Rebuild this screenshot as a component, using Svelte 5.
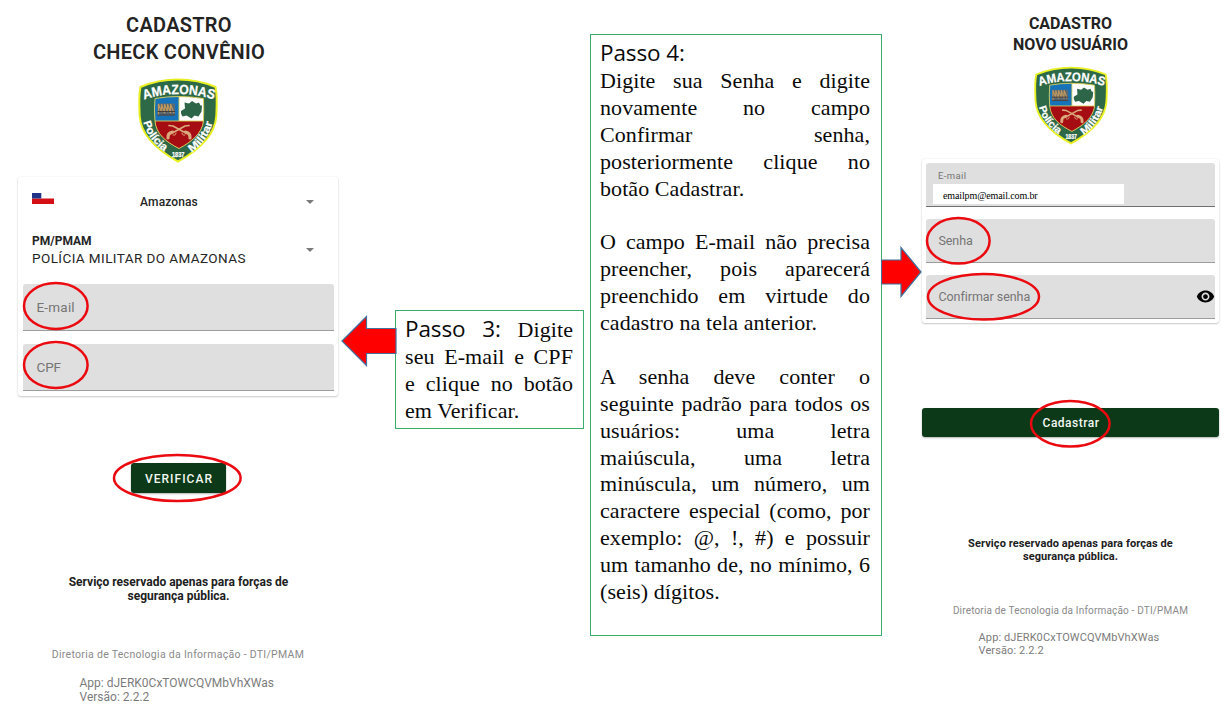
<script>
  const step3 = ['seu E-mail e CPF', 'e clique no botão'];
  const step4 = [
    ['Digite sua Senha e digite', 'novamente no campo', 'Confirmar senha,', 'posteriormente clique no', 'botão Cadastrar.'],
    ['O campo E-mail não precisa', 'preencher, pois aparecerá', 'preenchido em virtude do', 'cadastro na tela anterior.'],
    ['A senha deve conter o', 'seguinte padrão para todos os', 'usuários: uma letra', 'maiúscula, uma letra', 'minúscula, um número, um', 'caractere especial (como, por', 'exemplo: @, !, #) e possuir', 'um tamanho de, no mínimo, 6', '(seis) dígitos.']
  ];
</script>

{#snippet badge(id)}
  <svg class="badge" viewBox="0 0 80 85" aria-hidden="true">
    <path d="M40 1.500C54 1.500 67 4.500 77.500 9C79.500 18 78.800 28 78.300 38C77 59 59 73 40 83.500C21 73 3 59 1.700 38C1.200 28 .5 18 2.500 9C13 4.500 26 1.500 40 1.500Z" fill="#2d6847" stroke="#e9f022" stroke-width="2"/>
    <path d="M17 20.500Q40 16.500 65.500 20.500Q66 32 65.500 43C64 56 53 64 41 70.500C28 64 18 56 17 43Q16 32 17 20.500Z" fill="#fff"/>
    <path d="M17 20.500Q29 18.300 41 18.200V43H17Q16 32 17 20.500Z" fill="#1673b9"/>
    <path d="M17 43H65.500C64 56 53 64 41 70.500C28 64 18 56 17 43Z" fill="#a60d12"/>
    <path d="M17 43H65.500M41 18V43M17 20.500Q40 16.500 65.500 20.500Q66 32 65.500 43C64 56 53 64 41 70.500C28 64 18 56 17 43Q16 32 17 20.500Z" fill="none" stroke="#d8cf55" stroke-width=".9"/>
    <path d="M19.500 25.500h17.500v12h-17.500z" fill="#596873"/>
    <path d="M20.500 37v-11l3 8v-8l3 9v-9l3 8v-8l3 9v-9l3.500 9" fill="none" stroke="#bd965b" stroke-width="1.200"/>
    <path d="M19.500 33.500h17.500M19.500 37h17.500" stroke="#473d39" stroke-width="1"/>
    <path d="M43 33l4-2.500-.5-6 4.500 1 3-2.500 4 2.500 3-1 1.500 3h1.500l-.5 6-3 5-4-1-3 3-5-3-4 1-1.500-3z" fill="#2d6548"/>
    <g fill="none" stroke="#dba97c" stroke-linecap="round" stroke-linejoin="round">
      <path d="M31 47.500l4 .5 10 5.500 4 2" stroke-width="1.700"/>
      <path d="M51 47.500l-4 .5-10 5.500-4 2" stroke-width="1.700"/>
      <path d="M47.500 54q5 1 4.500 6M34.500 54q-5 1-4.500 6" stroke-width="3.200"/>
      <path d="M44 55q0 3 3 2M38 55q0 3-3 2" stroke-width=".9"/>
    </g>
    <path id="{id}-top" d="M6 21.500Q40 10.500 76 21.500" fill="none"/>
    <path id="{id}-left" d="M5.500 44Q9.500 62 28 74.500" fill="none"/>
    <path id="{id}-right" d="M53.500 74.500Q70.500 63 75 43" fill="none"/>
    <g fill="#fff" stroke="#fff" stroke-width=".25" font-family="Liberation Sans, sans-serif" font-weight="700">
      <text font-size="13.5"><textPath href="#{id}-top" textLength="71" lengthAdjust="spacingAndGlyphs">AMAZONAS</textPath></text>
      <text font-size="11"><textPath href="#{id}-left" textLength="37" lengthAdjust="spacingAndGlyphs">Polícia</textPath></text>
      <text font-size="11"><textPath href="#{id}-right" textLength="37.5" lengthAdjust="spacingAndGlyphs">Militar</textPath></text>
      <text x="34" y="79" font-size="7.500" textLength="12.500" lengthAdjust="spacingAndGlyphs">1837</text>
    </g>
  </svg>
{/snippet}

{#snippet ring(rx, ry)}
  <svg class="ring" width={rx * 2 + 4} height={ry * 2 + 4} aria-hidden="true">
    <ellipse cx={rx + 2} cy={ry + 2} {rx} {ry} fill="none" stroke="#ea0a10" stroke-width="2.500"/>
  </svg>
{/snippet}

<main>
  <section class="phone first">
    <h1>CADASTRO<br>CHECK CONVÊNIO</h1>
    {@render badge('check')}
    <div class="card">
      <div class="select state">
        <svg class="flag" width="22" height="11" viewBox="0 0 22 11"><path d="M0 5.500h22V11H0z" fill="#d40f15"/><path d="M0 0h9.300v5.500H0z" fill="#203487"/></svg>
        <b>Amazonas</b>
        <i class="caret"></i>
      </div>
      <div class="select force">
        <p><b>PM/PMAM</b><span>POLÍCIA MILITAR DO AMAZONAS</span></p>
        <i class="caret"></i>
      </div>
      <div class="field"><span class="mail">E-mail</span><div class="mark m1">{@render ring(31.8, 23)}</div></div>
      <div class="field"><span class="cpf">CPF</span><div class="mark m2">{@render ring(31.8, 23)}</div></div>
    </div>
    <button>VERIFICAR<span class="mark m3">{@render ring(63.3, 23)}</span></button>
    <p class="notice">Serviço reservado apenas para forças de<br>segurança pública.</p>
    <p class="dept">Diretoria de Tecnologia da Informação - DTI/PMAM</p>
    <p class="version">App: dJERK0CxTOWCQVMbVhXWas<br>Versão: 2.2.2</p>
  </section>

  <svg class="arrow left" width="56" height="52" viewBox="0 0 56 52"><path d="M1 26L25.500 1.500V13.500H55V38.500H25.500V50.500Z" fill="#fe0000" stroke="#41719c" stroke-width="1.200"/></svg>

  <aside class="note three">
    <p><span><em>Passo 3:</em> Digite</span>{#each step3 as line}<span>{line}</span>{/each}<span class="end">em Verificar.</span></p>
  </aside>

  <aside class="note four">
    <p><span class="end"><em>Passo 4:</em></span></p>
    {#each step4 as lines}
      <p class="block">{#each lines as line, i}<span class:end={i === lines.length - 1}>{line}</span>{/each}</p>
    {/each}
  </aside>

  <svg class="arrow right" width="41" height="52" viewBox="0 0 41 52"><path d="M40 26L20 1.500V14H.5V38H20V50.500Z" fill="#fe0000" stroke="#41719c" stroke-width="1.200"/></svg>

  <section class="phone second">
    <h1>CADASTRO<br>NOVO USUÁRIO</h1>
    {@render badge('novo')}
    <div class="card">
      <div class="field filled"><label for="email">E-mail</label><output id="email">emailpm@email.com.br</output></div>
      <div class="field"><span>Senha</span><div class="mark m4">{@render ring(31.3, 22.8)}</div></div>
      <div class="field"><span>Confirmar senha</span>
        <svg class="eye" width="19" height="19" viewBox="0 0 24 24"><path d="M12 4.500C7 4.500 2.730 7.610 1 12c1.730 4.390 6 7.500 11 7.500s9.270-3.110 11-7.500c-1.730-4.390-6-7.500-11-7.500zM12 17c-2.760 0-5-2.240-5-5s2.240-5 5-5 5 2.240 5 5-2.240 5-5 5zm0-8c-1.660 0-3 1.340-3 3s1.340 3 3 3 3-1.340 3-3-1.340-3-3-3z" fill="#050505"/></svg>
        <div class="mark m5">{@render ring(55.5, 22.8)}</div></div>
    </div>
    <button>Cadastrar<span class="mark m6">{@render ring(39.3, 22.8)}</span></button>
    <p class="notice">Serviço reservado apenas para forças de<br>segurança pública.</p>
    <p class="dept">Diretoria de Tecnologia da Informação - DTI/PMAM</p>
    <p class="version">App: dJERK0CxTOWCQVMbVhXWas<br>Versão: 2.2.2</p>
  </section>
</main>

<style>
  :global(body) { background: #fff; }
  main { display: flex; align-items: flex-start; width: 1227px; height: 715px; overflow: hidden; box-sizing: border-box; font-family: Roboto, sans-serif; }
  h1, p { margin: 0; }
  .phone { display: flex; flex-direction: column; align-items: center; flex: none; box-sizing: border-box; }
  .first { width: 320px; margin-left: 18px; padding-top: 12px; }
  .second { width: 297px; padding-top: 13px; }
  h1 { text-align: center; color: #232323; white-space: nowrap; }
  .first h1 { font-size: 20px; line-height: 27px; font-weight: 600; letter-spacing: .27px; padding-left: 2px; padding-bottom: 1px; }
  .second h1 { font-size: 16px; line-height: 21px; font-weight: 700; padding-bottom: 1px; }
  .badge { display: block; flex: none; overflow: visible; }
  .first .badge { width: 80px; height: 85px; margin-top: 11px; }
  .second .badge { width: 74px; height: 79px; margin-top: 10px; }
  .card { align-self: stretch; box-sizing: border-box; background: #fff; border-radius: 3px; box-shadow: 0 1px 2px rgba(0,0,0,.2), 0 0 2px rgba(0,0,0,.08); display: flex; flex-direction: column; }
  .first .card { margin-top: 14px; height: 219px; padding: 0 4px 5px 5px; }
  .second .card { margin-top: 13.5px; height: 164px; padding: 4px; gap: 12px; }
  .select { display: flex; align-items: center; color: #252525; }
  .state { height: 50px; padding: 0 20px 0 9px; }
  .state b { flex: 1; text-align: center; font-size: 12px; font-weight: 500; letter-spacing: .12px; padding: 2px 22px 0 0; }
  .state .caret { margin-top: 2px; }
  .flag { margin-bottom: 5px; }
  .force { height: 58px; padding: 0 20px 0 9px; justify-content: space-between; }
  .force p { display: flex; flex-direction: column; padding-bottom: 9px; }
  .force b { font-size: 12px; line-height: 17px; }
  .force span { font-size: 13.5px; line-height: 17px; letter-spacing: .42px; }
  .force .caret { margin-bottom: 9px; }
  .caret { border: 4.5px solid transparent; border-top-color: #7a7a7a; border-bottom: 0; width: 0; height: 0; }
  .field { position: relative; display: flex; align-items: center; box-sizing: border-box; background: #dfdfdf; border-bottom: 1.5px solid #9d9d9d; border-radius: 3px 3px 0 0; color: #757575; }
  .first .field { flex: none; height: 47px; font-size: 13.5px; padding-left: 13.5px; }
  .force + .field { margin-top: 0; }
  .first .force + .field { margin-top: .9px; }
  .first .field + .field { margin-top: 13.5px; }
  .mail { letter-spacing: .2px; }
  .cpf { letter-spacing: -.1px; }
  .second .field { height: 44.3px; font-size: 12.5px; letter-spacing: -.05px; padding-left: 12.4px; flex: none; }
  .second .filled { flex-direction: column; align-items: flex-start; padding: 7px 0 0 7px; border-color: #707070; }
  .filled label { font-size: 9.5px; line-height: 12px; letter-spacing: .4px; padding-left: 5px; }
  .filled output { margin-top: 2px; width: 191px; height: 20px; line-height: 24px; box-sizing: border-box; padding-left: 10px; background: #fff; color: #000; font-family: "Liberation Serif", serif; font-size: 10px; letter-spacing: -.12px; }
  .eye { margin-left: auto; }
  button { position: relative; border: 0; padding: 0; background: #0c3917; color: #f3f7f3; font: 500 12px Roboto, sans-serif; border-radius: 3px; box-shadow: 0 1px 2px rgba(0,0,0,.3); }
  .first button { width: 95px; height: 30px; margin-top: 67px; letter-spacing: 1.03px; padding: 1px 0 0 2px; }
  .second button { align-self: stretch; height: 29px; margin-top: 85.5px; letter-spacing: .48px; padding: 1px 0 0 1px; }
  .mark { position: absolute; width: 0; height: 0; display: flex; align-items: center; justify-content: center; z-index: 2; }
  .ring { flex: none; }
  .m1 { left: 33.2px; top: 22.7px; }
  .m2 { left: 33.2px; top: 20.5px; }
  .m3 { left: 46.5px; top: 15px; }
  .m4 { left: 32px; top: 22px; }
  .m5 { left: 57.5px; top: 21.3px; }
  .m6 { left: 148.7px; top: 15.7px; }
  .notice { text-align: center; font-weight: 700; color: #202020; white-space: nowrap; }
  .dept { color: #8a8a8a; white-space: nowrap; }
  .version { align-self: flex-start; color: #7c7c7c; white-space: nowrap; }
  .first .notice { margin-top: 81.5px; font-size: 12px; line-height: 14px; padding-left: 1px; }
  .first .dept { margin-top: 44.5px; font-size: 10.5px; line-height: 16px; letter-spacing: .29px; }
  .first .version { margin: 13px 0 0 61.5px; font-size: 12px; line-height: 14px; }
  .second .notice { margin-top: 99.5px; font-size: 11px; line-height: 13px; letter-spacing: .09px; }
  .second .dept { margin-top: 41px; font-size: 10px; line-height: 14px; letter-spacing: .17px; }
  .second .version { margin: 13px 0 0 56.6px; font-size: 11px; line-height: 13px; letter-spacing: .09px; }
  .arrow { flex: none; position: relative; z-index: 1; }
  .left { margin: 315px -2px 0 3px; }
  .right { margin: 246px 0 0 -1px; }
  .note { flex: none; box-sizing: border-box; border: 1px solid #3aac6c; background: #fff; color: #0a0a0a; font-family: "Liberation Serif", serif; font-size: 22px; line-height: 26.9px; letter-spacing: .08px; }
  .note span { display: block; text-align: justify; text-align-last: justify; white-space: nowrap; }
  .note .end { text-align-last: left; }
  .note em { font-family: "Open Sans", sans-serif; font-style: normal; font-size: 22.5px; line-height: 0; letter-spacing: -.12px; }
  .three { width: 189px; height: 118.5px; margin-top: 310px; padding: 6.2px 10px 0 9px; }
  .four { width: 292px; height: 602px; margin: 34px 0 0 6px; padding: 6px 11px 0 9px; }
  .block + .block { margin-top: 26.9px; }
</style>
